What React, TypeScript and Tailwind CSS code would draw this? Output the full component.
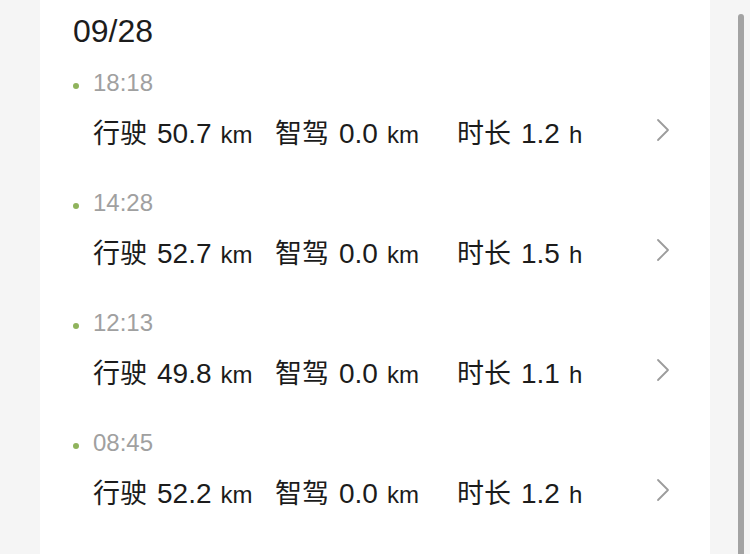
import React from "react";

type Trip = {
  time: string;
  distance: string;
  assisted: string;
  duration: string;
};

const trips: Trip[] = [
  { time: "18:18", distance: "50.7", assisted: "0.0", duration: "1.2" },
  { time: "14:28", distance: "52.7", assisted: "0.0", duration: "1.5" },
  { time: "12:13", distance: "49.8", assisted: "0.0", duration: "1.1" },
  { time: "08:45", distance: "52.2", assisted: "0.0", duration: "1.2" },
];

const font = {
  fontFamily: '"Liberation Sans", "Noto Sans CJK SC", sans-serif',
};

function Stat({ label, value, unit }: { label: string; value: string; unit: string }) {
  return (
    <div className="w-[182px] flex items-baseline whitespace-nowrap">
      <span className="text-[27px]">{label}</span>
      <span className="ml-[10px] text-[28px]">{value}</span>
      <span className="ml-[9px] text-[24px]">{unit}</span>
    </div>
  );
}

function TripRow({ trip }: { trip: Trip }) {
  return (
    <div className="pb-[36px]">
      <div className="flex items-center h-[30px]">
        <span className="w-[6px] h-[6px] rounded-full bg-[#8fb35c] mt-[5px]" />
        <span className="ml-[14px] text-[24px] text-[#a0a0a0]">{trip.time}</span>
      </div>
      <div className="mt-[18px] h-[36px] flex items-center pl-[20px] pr-[40px] text-[#1c1c1c]">
        <Stat label="行驶" value={trip.distance} unit="km" />
        <Stat label="智驾" value={trip.assisted} unit="km" />
        <Stat label="时长" value={trip.duration} unit="h" />
        <div className="flex-1" />
        <svg width="14" height="24" viewBox="0 0 14 24" fill="none" className="mb-[8px]">
          <path d="M2 2 L12 12 L2 22" stroke="#9c9c9c" strokeWidth="1.8" strokeLinecap="round" strokeLinejoin="round" />
        </svg>
      </div>
    </div>
  );
}

export default function App() {
  return (
    <div className="w-[750px] h-[554px] bg-[#f5f5f5] flex overflow-hidden" style={font}>
      <div className="ml-[40px] w-[670px] bg-white pl-[33px] pt-[13px]">
        <div className="h-[36px] leading-[36px] text-[32px] text-[#1c1c1c]">09/28</div>
        <div className="mt-[19px]">
          {trips.map((t) => (
            <TripRow key={t.time} trip={t} />
          ))}
        </div>
      </div>
      <div className="ml-[28px] mt-[14px] w-[6px] h-[560px] rounded-full bg-[#a3a3a3]" />
    </div>
  );
}
